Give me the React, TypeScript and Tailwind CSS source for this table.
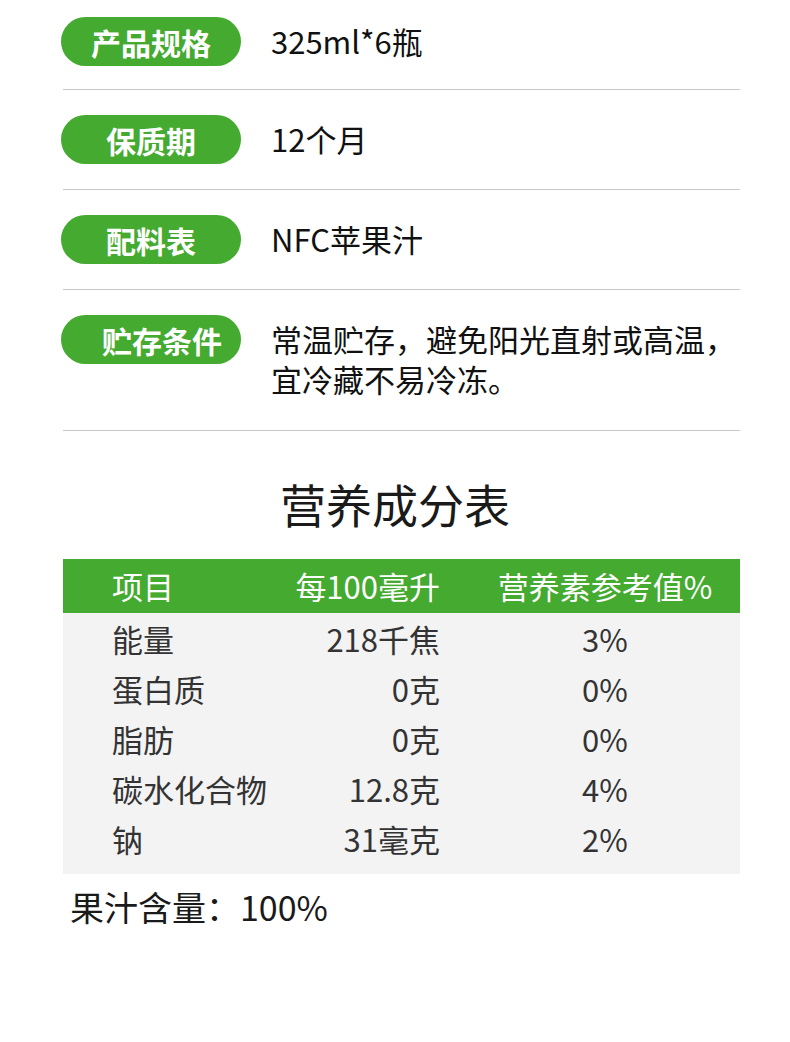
const specs = [
  { label: "产品规格", value: ["325ml*6瓶"] },
  { label: "保质期", value: ["12个月"] },
  { label: "配料表", value: ["NFC苹果汁"] },
  { label: "贮存条件", value: ["常温贮存，避免阳光直射或高温，", "宜冷藏不易冷冻。"], offset: true },
];

const nutrition = [
  { name: "能量", amount: "218千焦", nrv: "3%" },
  { name: "蛋白质", amount: "0克", nrv: "0%" },
  { name: "脂肪", amount: "0克", nrv: "0%" },
  { name: "碳水化合物", amount: "12.8克", nrv: "4%" },
  { name: "钠", amount: "31毫克", nrv: "2%" },
];

export default function App() {
  return (
    <div className="w-[790px] h-[1042px] bg-white font-[family-name:'Noto_Sans_CJK_SC',sans-serif] text-[#111]">
      {/* ─── Spec rows ─── */}
      <div className="pl-[63px] pr-[50px]">
        {specs.map((row, i) => (
          <div
            key={row.label}
            className={`flex items-start border-b border-[#c8c8c8] ${
              i === 0 ? "pt-[17px] pb-[23px]" : row.value.length > 1 ? "pt-[25px] pb-[31px]" : "pt-[25px] pb-[25px]"
            }`}
          >
            <div
              className={`-ml-[2px] flex h-[49px] w-[180px] shrink-0 items-center rounded-full bg-[#44aa30] text-[30px] font-bold leading-none text-white ${
                row.offset ? "justify-start pl-[41px]" : "justify-center"
              }`}
            >
              {row.label}
            </div>
            <div className="ml-[30px] mt-[4px] whitespace-nowrap text-[31px] leading-[40px] text-[#111]">
              {row.value.map((line) => (
                <div key={line}>{line}</div>
              ))}
            </div>
          </div>
        ))}
      </div>

      {/* ─── Nutrition table ─── */}
      <h2 className="mt-[49px] text-center text-[46px] font-normal leading-[46px] text-[#1a1a1a]">
        营养成分表
      </h2>

      <div className="mx-[63px] mt-[33px] w-[677px] whitespace-nowrap text-[31px] leading-none">
        <div className="grid h-[54px] grid-cols-[377px_1fr] items-center bg-[#44aa30] pb-[1px] text-white">
          <div className="grid grid-cols-[49px_1fr_auto] items-center">
            <span />
            <span>项目</span>
            <span>每100毫升</span>
          </div>
          <div className="pl-[50px]">
            <span className="block w-[230px] text-center">营养素参考值%</span>
          </div>
        </div>
        <div className="bg-[#f3f3f3] pb-[11px] text-[#333]">
          {nutrition.map((r) => (
            <div key={r.name} className="grid h-[50px] grid-cols-[377px_1fr] items-center">
              <div className="grid grid-cols-[49px_1fr_auto] items-center">
                <span />
                <span>{r.name}</span>
                <span>{r.amount}</span>
              </div>
              <div className="pl-[50px]">
                <span className="block w-[230px] text-center">{r.nrv}</span>
              </div>
            </div>
          ))}
        </div>
      </div>

      <p className="ml-[70px] mt-[16px] text-[34px] leading-[34px] text-[#1a1a1a]">果汁含量：100%</p>
    </div>
  );
}
